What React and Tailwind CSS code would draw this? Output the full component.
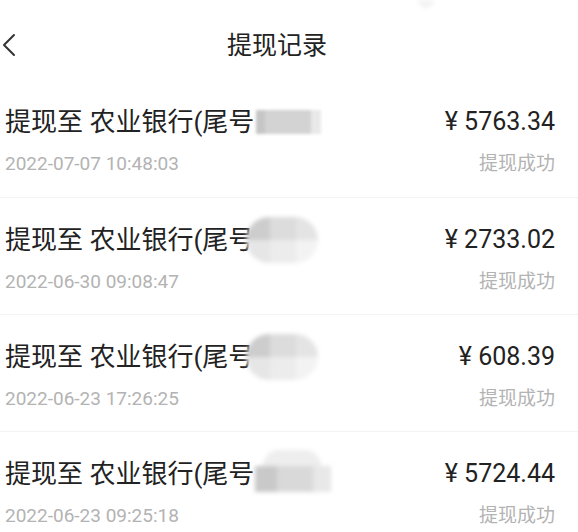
import React from "react";

const rows = [
  { date: "2022-07-07 10:48:03", amount: "5763.34", blob: "r1" },
  { date: "2022-06-30 09:08:47", amount: "2733.02", blob: "r2" },
  { date: "2022-06-23 17:26:25", amount: "608.39", blob: "r3" },
  { date: "2022-06-23 09:25:18", amount: "5724.44", blob: "r4" },
];

function Blob({ kind }) {
  if (kind === "r1") {
    return (
      <span className="inline-flex h-[24px] ml-[2px] blur-[1.5px]">
        <span className="w-[9px] bg-[#c6c6c6]" />
        <span className="w-[46px] bg-[#d3d3d3]" />
        <span className="w-[10px] bg-[#e9e9e9]" />
      </span>
    );
  }
  if (kind === "r4") {
    return (
      <span className="inline-flex flex-col w-[80px] h-[42px] ml-[1px] mt-[-6px] blur-[2px]">
        <span className="h-[16px] ml-[8px] mr-[14px] rounded-t-full bg-[#eeeeee]" />
        <span className="flex flex-1">
          <span className="w-[22px] bg-[#c9c9c9]" />
          <span className="w-[36px] bg-[#d9d9d9]" />
          <span className="w-[18px] bg-[#e8e8e8]" />
        </span>
      </span>
    );
  }
  return (
    <span className="inline-grid grid-cols-[24px_26px_22px] grid-rows-2 w-[72px] h-[46px] -ml-[8px] rounded-[23px] overflow-hidden blur-[2px]">
      <span className="bg-[#cdcdcd]" />
      <span className="bg-[#dcdcdc]" />
      <span className="bg-[#e4e4e4]" />
      <span className="bg-[#e6e6e6]" />
      <span className="bg-[#ececec]" />
      <span className="bg-[#f3f3f3]" />
    </span>
  );
}

export default function App() {
  return (
    <div
      className="w-[578px] h-[532px] bg-white overflow-hidden relative"
      style={{ fontFamily: "Roboto, 'Noto Sans CJK SC', sans-serif" }}
    >
      <div className="absolute left-[418px] top-0 w-[16px] h-[8px] rounded-b-full bg-[#f3f3f3] blur-[2px]" />
      <div className="h-[80px] flex items-center pl-[2px] pt-[10px]">
        <svg width="14" height="24" viewBox="0 0 14 24" fill="none">
          <path d="M12 2 L2 12 L12 22" stroke="#333" strokeWidth="2" strokeLinecap="round" strokeLinejoin="round" />
        </svg>
        <div className="flex-1 flex justify-center pr-[40px]">
          <div className="text-[25px] text-[#222] leading-none">提现记录</div>
        </div>
      </div>
      <div className="flex flex-col">
        {rows.map((r, i) => (
          <div
            key={i}
            className={
              "h-[117px] pl-[5px] pr-[23px] pt-[27px] flex justify-between " +
              (i > 0 ? "border-t border-[#f3f3f3]" : "")
            }
          >
            <div className="flex flex-col gap-[16px]">
              <div className="text-[26px] text-[#222] leading-[30px] h-[30px] flex items-center whitespace-nowrap">
                <span>提现至 农业银行(尾号</span>
                <Blob kind={r.blob} />
              </div>
              <div className="text-[19px] text-[#b3b3b3] leading-[22px]">{r.date}</div>
            </div>
            <div className="flex flex-col items-end gap-[16px]">
              <div className="text-[25px] text-[#222] leading-[30px]">¥ {r.amount}</div>
              <div className="text-[19px] text-[#b3b3b3] leading-[22px]">提现成功</div>
            </div>
          </div>
        ))}
      </div>
    </div>
  );
}
